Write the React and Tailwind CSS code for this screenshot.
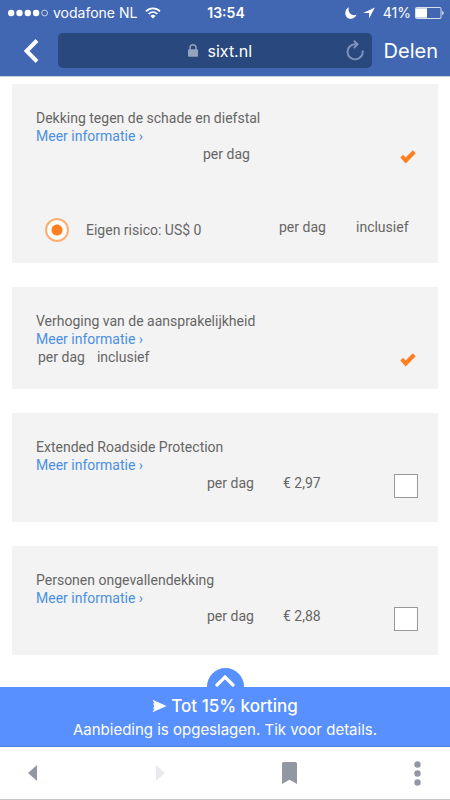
import React from 'react';

const orange = '#ff7f1e';

function Wifi() {
  return (
    <svg width="16" height="12" viewBox="0 0 16 12" fill="none" stroke="#fff" strokeWidth="1.7">
      <path d="M1 4.4C5 .3 11 .3 15 4.4" />
      <path d="M3.6 7C6.2 4.5 9.8 4.5 12.4 7" />
      <path d="M8 11.6L5.4 8.9c1.5-1.4 3.7-1.4 5.2 0z" fill="#fff" stroke="none" />
    </svg>
  );
}

function StatusBar() {
  return (
    <div className="grid h-[25px] grid-cols-[1fr_auto_1fr] items-center pr-1.5 pl-2 text-sm leading-[18px]">
      <div className="flex items-center">
        <svg width="41" height="8" viewBox="0 0 41 8" fill="#fff">
          <circle cx="3.2" cy="4" r="3.2" />
          <circle cx="11.5" cy="4" r="3.2" />
          <circle cx="19.8" cy="4" r="3.2" />
          <circle cx="28.1" cy="4" r="3.2" />
          <circle cx="36.6" cy="4" r="2.9" fill="none" stroke="#fff" strokeWidth="0.7" />
        </svg>
        <span className="ml-1 mr-2">vodafone NL</span>
        <Wifi />
      </div>
      <span className="font-semibold">13:54</span>
      <div className="flex items-center justify-end">
        <svg width="12" height="12" viewBox="0 0 12 12" fill="#fff">
          <path d="M3.800.3C3 3.400 3.900 5.800 6 7.200 7.800 8.400 9.900 8.400 11.700 7.600 10.600 10.300 8.400 11.800 5.900 11.800 2.700 11.800.3 9.300.3 6.200.3 3.500 1.700 1.300 3.800.3z" />
        </svg>
        <svg className="ml-1.5" width="12" height="12" viewBox="0 0 12 12" fill="#fff">
          <path d="M11.800.4L.2 5.900h5.900v5.700z" />
        </svg>
        <span className="ml-2">41%</span>
        <svg className="ml-1" width="29" height="12" viewBox="0 0 29 12">
          <rect x="0.500" y="0.500" width="25.500" height="11" rx="1" fill="none" stroke="#fff" strokeWidth="0.8" />
          <rect x="1" y="1.300" width="11" height="9.400" fill="#fff" />
          <path d="M27.300 4c1.700.5 1.700 3.500 0 4z" fill="#fff" />
        </svg>
      </div>
    </div>
  );
}

function Header() {
  return (
    <header className="border-b border-[#c9cede] bg-[#4167b2] text-white">
      <StatusBar />
      <div className="flex items-center pt-2 pr-3 pb-2 pl-6">
        <button type="button" aria-label="Terug" className="mr-[19px]">
          <svg width="15" height="24" viewBox="0 0 15 24" fill="none" stroke="#fff" strokeWidth="4">
            <path d="M13 1.500L2.600 12 13 22.500" />
          </svg>
        </button>
        <div className="grid h-[35px] flex-1 grid-cols-[1fr_auto_1fr] items-center rounded-[5px] bg-[#29487d] pl-2.5">
          <span />
          <span className="flex items-center gap-2.5 text-base leading-5">
            <svg width="10" height="13" viewBox="0 0 10 13">
              <rect y="5.300" width="10" height="7.500" rx="1" fill="#94a3be" />
              <path d="M2 6V3.800a3 3 0 016 0V6" fill="none" stroke="#94a3be" strokeWidth="1.400" />
            </svg>
            sixt.nl
          </span>
          <button type="button" aria-label="Vernieuwen" className="mr-2 justify-self-end">
            <svg width="18" height="21" viewBox="0 0 18 21" fill="none" stroke="#7f94bf" strokeWidth="1.900">
              <path d="M11 4.200H9.200A7.600 7.600 0 1016.600 10.500" />
              <path d="M7.800.8l3.800 3.500-3.800 3.800" />
            </svg>
          </button>
        </div>
        <button type="button" className="ml-3 text-xl leading-6">Delen</button>
      </div>
    </header>
  );
}

function Card({ title, children }) {
  return (
    <section className="bg-[#f3f3f3] pt-[25px] pr-5 pl-6">
      <h2>{title}</h2>
      <a href="#info" className="block w-fit text-[#4a90e2]">Meer informatie ›</a>
      {children}
    </section>
  );
}

function Included({ label }) {
  return (
    <label className="flex size-6 items-center justify-end">
      <input type="checkbox" defaultChecked aria-label={label} className="peer sr-only" />
      <svg className="mr-0.5" width="16" height="14" viewBox="0 0 16 14" fill={orange}>
        <path d="M.3 7.600L3 4.800l2.600 2.600L12.800.3l2.900 2.900L5.700 13.400z" />
      </svg>
    </label>
  );
}

function PriceRow({ title, price }) {
  return (
    <div className="flex justify-end pb-6">
      <span className="w-[76px]">per dag</span>
      <span className="w-[111px]">{price}</span>
      <input
        type="checkbox"
        aria-label={title}
        className="size-6 appearance-none border border-[#999] bg-white checked:bg-[#ff7f1e]"
      />
    </div>
  );
}

export default function App() {
  return (
    <div className="flex min-h-screen flex-col bg-white font-['Inter','Liberation_Sans',sans-serif]">
      <Header />
      <main className="flex flex-1 flex-col gap-6 px-3 pt-[7px] pb-[13px] font-['Roboto',sans-serif] text-sm leading-[18px] text-[#666]">
        <Card title="Dekking tegen de schade en diefstal">
          <div className="flex justify-end">
            <span className="w-[191px]">per dag</span>
            <Included label="Dekking tegen de schade en diefstal" />
          </div>
          <div className="mt-[49px] flex pb-[21px] pl-[9px]">
            <label className="flex items-center gap-[17px]">
              <input
                type="radio"
                name="risico"
                defaultChecked
                className="size-6 appearance-none rounded-full border-2 border-[#ffae72] bg-white checked:bg-[radial-gradient(circle,#ff7f1e_5px,#fff_6px)]"
              />
              Eigen risico: US$ 0
            </label>
            <span className="ml-auto w-[77px]">per dag</span>
            <span className="w-[62px]">inclusief</span>
          </div>
        </Card>
        <Card title="Verhoging van de aansprakelijkheid">
          <div className="flex gap-3 pb-[17px] pl-0.5">
            <span>per dag</span>
            <span className="flex-1">inclusief</span>
            <Included label="Verhoging van de aansprakelijkheid" />
          </div>
        </Card>
        <Card title="Extended Roadside Protection">
          <PriceRow title="Extended Roadside Protection" price="€ 2,97" />
        </Card>
        <Card title="Personen ongevallendekking">
          <PriceRow title="Personen ongevallendekking" price="€ 2,88" />
        </Card>
      </main>
      <footer>
        <div className="flex justify-center">
          <button
            type="button"
            aria-label="Openen"
            className="flex h-[19px] w-[37px] justify-center rounded-t-full bg-[#5890ff] pt-[7px]"
          >
            <svg width="20" height="12" viewBox="0 0 20 12" fill="none" stroke="#fff" strokeWidth="3.200" strokeLinecap="round">
              <path d="M2 10l8-8 8 8" />
            </svg>
          </button>
        </div>
        <a href="#aanbieding" className="flex h-[60px] flex-col items-center border-b border-[#4a80dc] bg-[#5890ff] pt-[7px] text-white">
          <span className="flex items-center gap-1 text-[17px] leading-6 font-medium">
            <svg width="15" height="14" viewBox="0 0 15 14" fill="#fff">
              <path d="M.5.800L14.500 7 .5 13.200 2.600 9.200.8 9.800 2.400 7 .8 4.200l1.800.6z" />
            </svg>
            Tot 15% korting
          </span>
          <span className="text-[15px] leading-6">Aanbieding is opgeslagen. Tik voor details.</span>
        </a>
        <nav className="flex h-[53px] items-center justify-between border-b border-[#c4c6ca] px-6 text-[#9197a3]">
          <button type="button" aria-label="Vorige" className="flex w-4 justify-center">
            <svg width="9" height="16" viewBox="0 0 9 16" fill="currentColor"><path d="M9 0v16L0 8z" /></svg>
          </button>
          <button type="button" aria-label="Volgende" className="flex w-4 justify-center text-[#e9eaed]">
            <svg width="9" height="16" viewBox="0 0 9 16" fill="currentColor"><path d="M0 0v16l9-8z" /></svg>
          </button>
          <button type="button" aria-label="Bladwijzer" className="flex w-4 justify-center">
            <svg width="15" height="22" viewBox="0 0 15 22" fill="currentColor">
              <path d="M1.500 0h12A1.500 1.500 0 0115 1.500V22l-7.500-4.200L0 22V1.500A1.500 1.500 0 011.500 0z" />
            </svg>
          </button>
          <button type="button" aria-label="Meer" className="flex w-4 justify-center">
            <svg width="7" height="25" viewBox="0 0 7 25" fill="currentColor">
              <circle cx="3.500" cy="3.500" r="3.200" />
              <circle cx="3.500" cy="12.500" r="3.200" />
              <circle cx="3.500" cy="21.500" r="3.200" />
            </svg>
          </button>
        </nav>
      </footer>
    </div>
  );
}
